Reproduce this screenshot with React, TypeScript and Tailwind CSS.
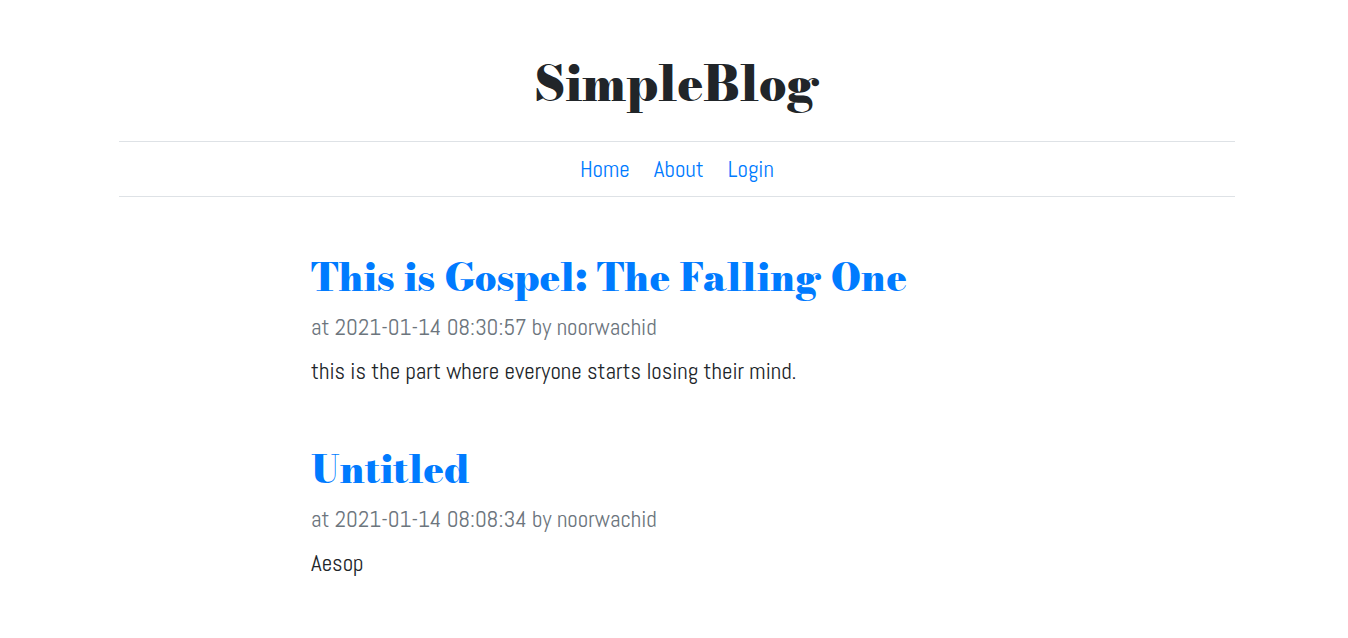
const posts = [
  {
    id: 2,
    title: 'This is Gospel: The Falling One',
    date: '2021-01-14 08:30:57',
    author: 'noorwachid',
    body: 'this is the part where everyone starts losing their mind.',
  },
  { id: 1, title: 'Untitled', date: '2021-01-14 08:08:34', author: 'noorwachid', body: 'Aesop' },
];

const links = ['Home', 'About', 'Login'];

export default function App() {
  return (
    <div className="bg-white pl-1.5 font-['Abel','Liberation_Sans_Narrow',sans-serif] text-[23px] leading-8 text-[#212529]">
      <div className="mx-auto max-w-[1140px] px-3 py-12">
        <header>
          <h1 className="pb-[22px] text-center font-['Bodoni_Moda','DejaVu_Serif',serif] text-[48px] leading-[71px] font-black">
            SimpleBlog
          </h1>
          <nav className="flex justify-center gap-6 border-y border-[#dee2e6] py-[11px]">
            {links.map((link) => (
              <a key={link} href="#" className="text-[#007bff]">
                {link}
              </a>
            ))}
          </nav>
        </header>
        <main className="mx-auto flex max-w-[732px] flex-col gap-[52px] pt-[50px]">
          {posts.map((post) => (
            <article key={post.id}>
              <h2 className="mb-1 font-['Bodoni_Moda','DejaVu_Serif',serif] text-[38px] leading-[60px] font-black">
                <a href="#" className="text-[#007bff]">
                  {post.title}
                </a>
              </h2>
              <p className="mb-3 text-[#6c757d]">
                at {post.date} by {post.author}
              </p>
              <p>{post.body}</p>
            </article>
          ))}
        </main>
      </div>
    </div>
  );
}
